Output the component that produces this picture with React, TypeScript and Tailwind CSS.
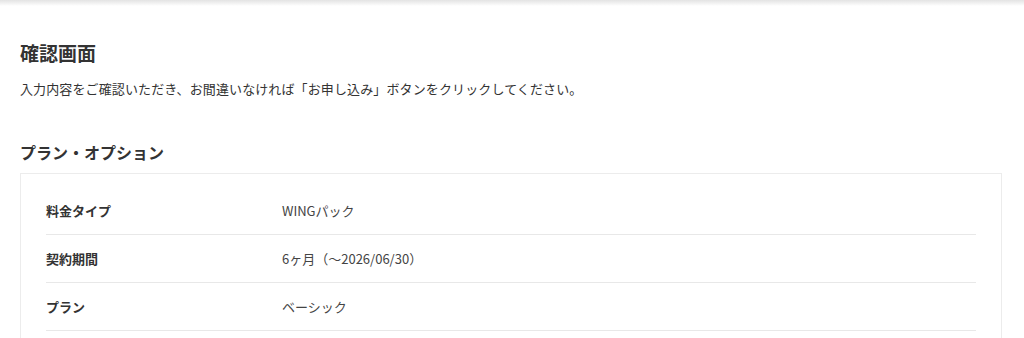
import React from 'react';

const rows = [
  { label: '料金タイプ', value: 'WINGパック' },
  { label: '契約期間', value: '6ヶ月（〜2026/06/30）' },
  { label: 'プラン', value: 'ベーシック' },
];

export default function App() {
  return (
    <div
      className="min-h-screen bg-white text-[#333]"
      style={{ fontFamily: '"Noto Sans CJK JP", "Noto Sans", sans-serif' }}
    >
      <div className="h-[6px] bg-gradient-to-b from-[#e3e3e3] to-white" />

      <div className="pl-5 pr-[22px]">
        <h1 className="mt-[33px] text-[19px] leading-[28px] font-bold text-[#333]">確認画面</h1>
        <p className="mt-3 text-[13px] leading-5 tracking-[0.12px] text-[#333]">
          入力内容をご確認いただき、お間違いなければ「お申し込み」ボタンをクリックしてください。
        </p>

        <h2 className="mt-[41px] text-base leading-6 font-bold text-[#333]">プラン・オプション</h2>

        <div className="mt-[9px] border border-[#ececec] px-[25px] pt-[13px] pb-[24px]">
          {rows.map((r) => (
            <div key={r.label} className="flex h-12 items-center border-b border-[#e8e8e8]">
              <div className="w-[236px] shrink-0 text-[13px] font-bold text-[#333]">{r.label}</div>
              <div className="text-[13px] text-[#444]">{r.value}</div>
            </div>
          ))}
        </div>
      </div>
    </div>
  );
}
